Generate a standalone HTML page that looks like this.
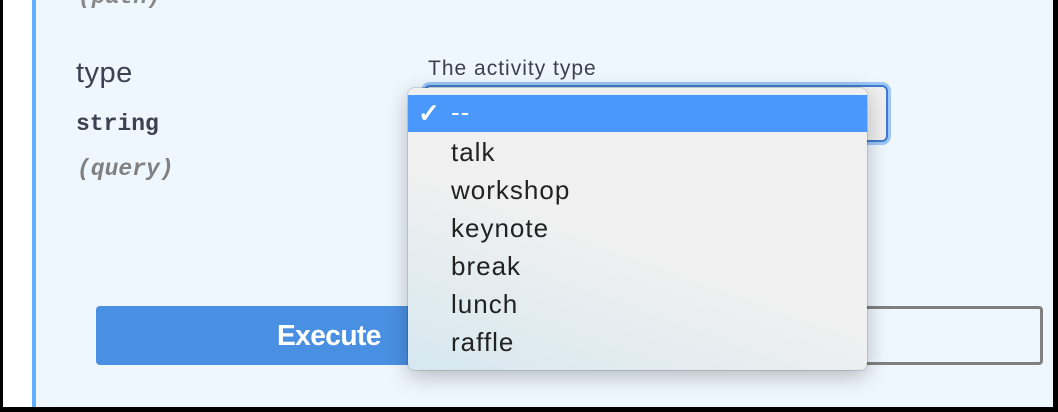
<!DOCTYPE html>
<html><head><style>
html,body{margin:0;padding:0;}
body{width:1058px;height:412px;background:#000;position:relative;overflow:hidden;font-family:"Liberation Sans",sans-serif;}
.white{position:absolute;left:3px;top:0;width:29px;height:407px;background:#fff;}
.bar{position:absolute;left:32px;top:0;width:4px;height:407px;background:#61affe;}
.bg{position:absolute;left:36px;top:0;width:1017px;height:407px;background:#eef6fe;}
.t{position:absolute;color:#3b4151;white-space:nowrap;}
.sel{position:absolute;left:424px;top:85px;width:460px;height:53px;border:2px solid #3e7bd0;border-radius:6px;background:#efefef;box-shadow:0 0 0 3px #9cc6f5;}
.exec{position:absolute;left:96px;top:306px;width:330px;height:59px;background:#4a90e2;border-radius:4px;}
.exec span{position:absolute;left:181px;top:14px;color:#fff;font-weight:bold;font-size:29px;letter-spacing:-0.6px;transform:scaleX(0.97);transform-origin:left;}
.clear{position:absolute;left:840px;top:306px;width:203px;height:59px;border:3px solid #808080;border-radius:4px;box-sizing:border-box;}
.dd{position:absolute;left:408px;top:88px;width:459px;height:282px;border-radius:7px;background:linear-gradient(200deg,#f0f0f0 55%,#d6e8f0 100%);box-shadow:0 6px 22px rgba(0,0,0,0.25),0 0 0 1px rgba(0,0,0,0.12);}
.hl{position:absolute;left:0;top:7px;width:459px;height:37px;background:#4a98fc;}
.it{position:absolute;left:43px;font-size:26px;letter-spacing:1px;color:#222;}
</style></head><body>
<div class="white"></div><div class="bar"></div><div class="bg"></div>
<div class="t" style="left:78px;top:-16px;font-family:'Liberation Mono',monospace;font-style:italic;font-weight:bold;font-size:23px;color:#888;">(path)</div>
<div class="t" style="left:76px;top:57px;font-size:29px;letter-spacing:0.5px;">type</div>
<div class="t" style="left:76px;top:111px;font-family:'Liberation Mono',monospace;font-weight:bold;font-size:23px;">string</div>
<div class="t" style="left:77px;top:156px;font-family:'Liberation Mono',monospace;font-style:italic;font-weight:bold;font-size:23px;color:#808080;">(query)</div>
<div class="t" style="left:428px;top:57px;font-size:21px;letter-spacing:1px;">The activity type</div>
<div class="sel"></div>
<div class="exec"><span>Execute</span></div>
<div class="clear"></div>
<div class="dd">
<div class="hl"></div>
<div class="it" style="left:10px;top:10px;color:#fff;font-weight:bold;">✓</div>
<div class="it" style="top:9px;color:#fff;">--</div>
<div class="it" style="top:49px;">talk</div>
<div class="it" style="top:87px;">workshop</div>
<div class="it" style="top:125px;">keynote</div>
<div class="it" style="top:163px;">break</div>
<div class="it" style="top:201px;">lunch</div>
<div class="it" style="top:239px;">raffle</div>
</div>
</body></html>
